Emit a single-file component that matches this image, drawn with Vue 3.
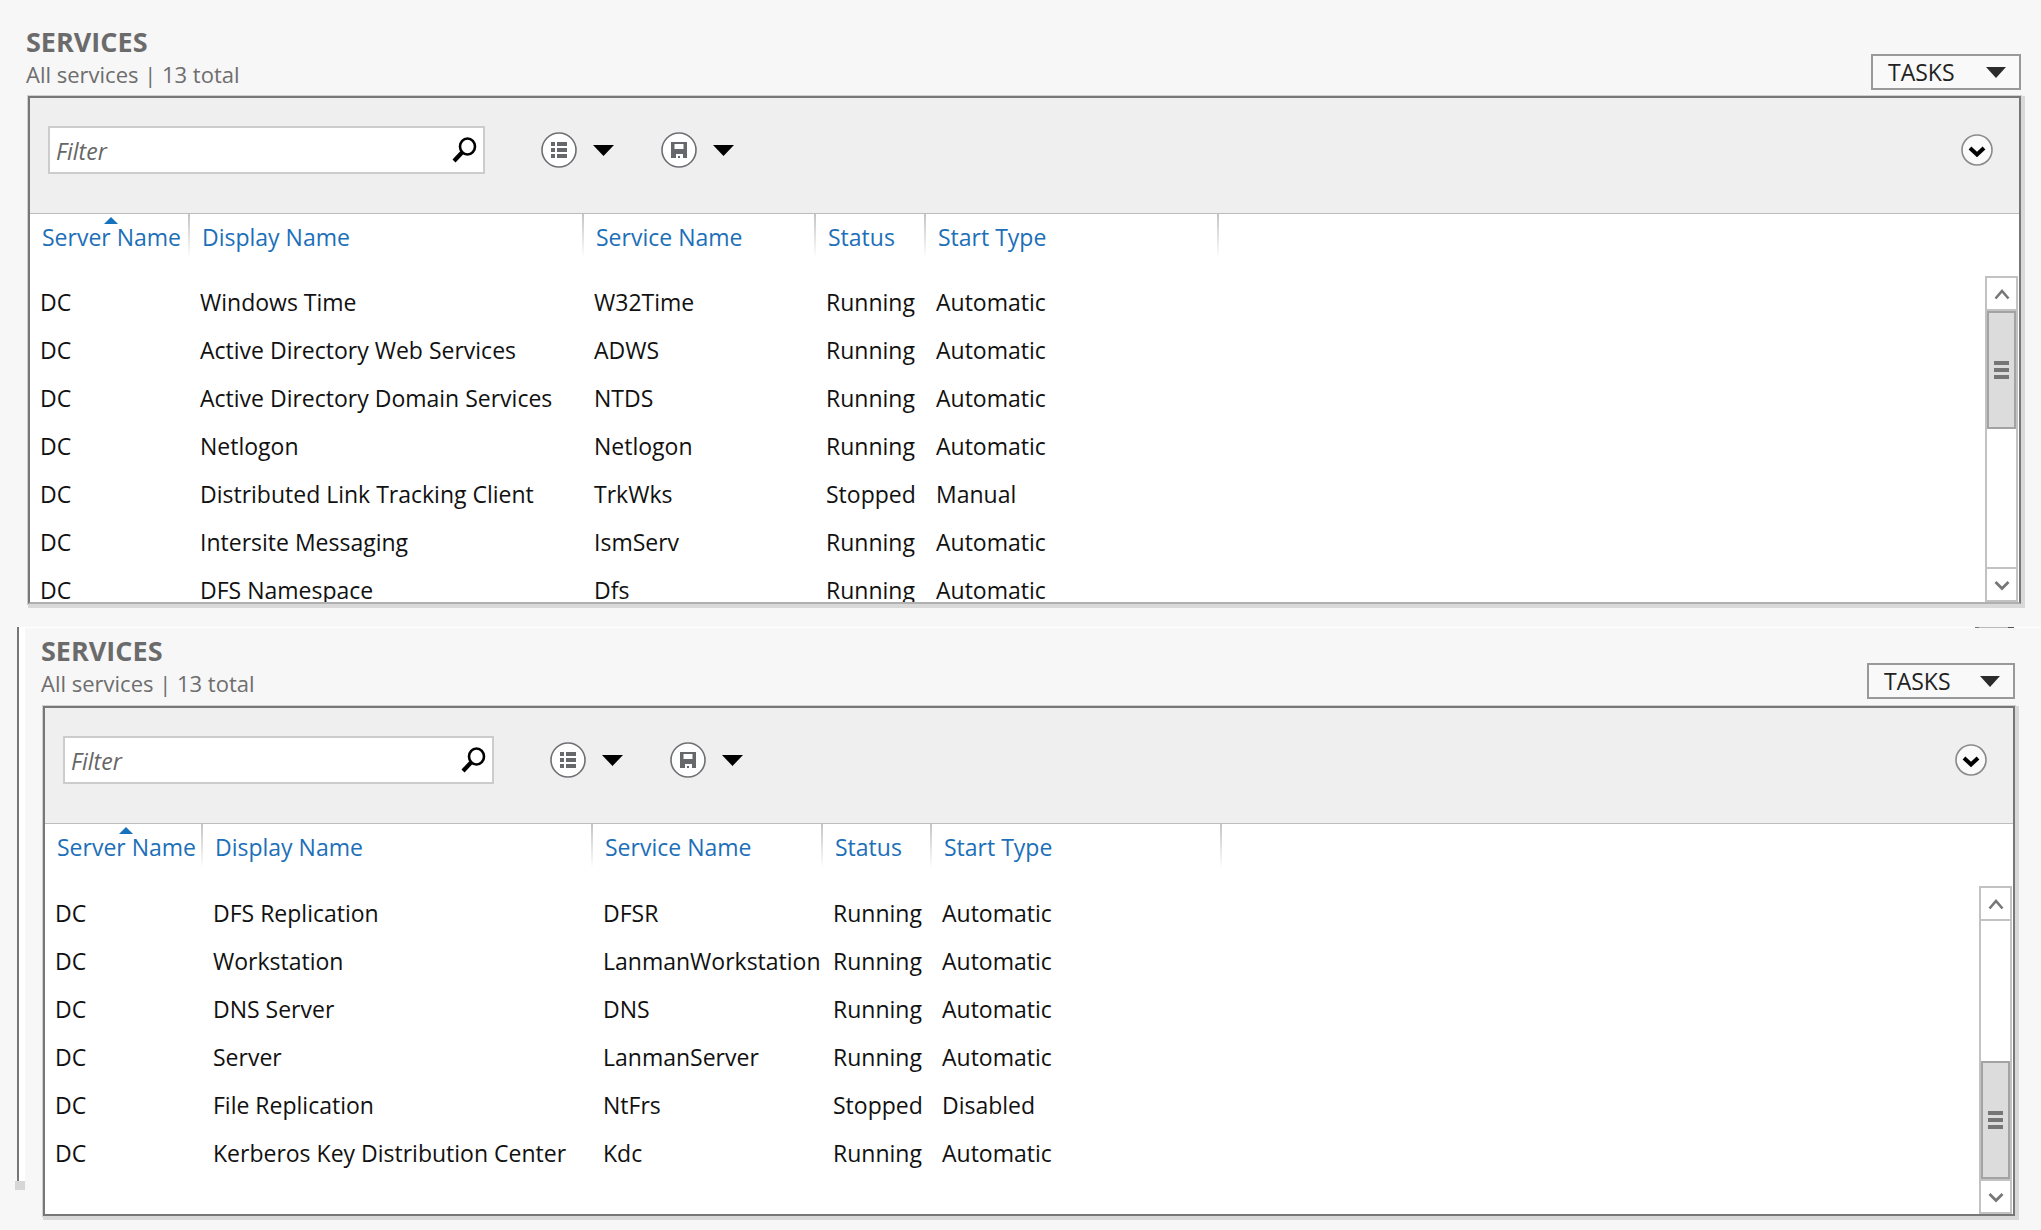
<script setup>
import { ref } from 'vue'

const columns = ['Server Name', 'Display Name', 'Service Name', 'Status', 'Start Type']

const panels = ref([
  {
    id: 'upper',
    filter: '',
    rows: [
      ['DC', 'Windows Time', 'W32Time', 'Running', 'Automatic'],
      ['DC', 'Active Directory Web Services', 'ADWS', 'Running', 'Automatic'],
      ['DC', 'Active Directory Domain Services', 'NTDS', 'Running', 'Automatic'],
      ['DC', 'Netlogon', 'Netlogon', 'Running', 'Automatic'],
      ['DC', 'Distributed Link Tracking Client', 'TrkWks', 'Stopped', 'Manual'],
      ['DC', 'Intersite Messaging', 'IsmServ', 'Running', 'Automatic'],
      ['DC', 'DFS Namespace', 'Dfs', 'Running', 'Automatic'],
    ],
  },
  {
    id: 'lower',
    filter: '',
    rows: [
      ['DC', 'DFS Replication', 'DFSR', 'Running', 'Automatic'],
      ['DC', 'Workstation', 'LanmanWorkstation', 'Running', 'Automatic'],
      ['DC', 'DNS Server', 'DNS', 'Running', 'Automatic'],
      ['DC', 'Server', 'LanmanServer', 'Running', 'Automatic'],
      ['DC', 'File Replication', 'NtFrs', 'Stopped', 'Disabled'],
      ['DC', 'Kerberos Key Distribution Center', 'Kdc', 'Running', 'Automatic'],
    ],
  },
])
</script>

<template>
  <main class="page">
    <div v-for="p in panels" :key="p.id" class="frame" :class="p.id">
      <div v-if="p.id === 'lower'" class="edge"><div class="edge-inner"></div></div>
      <section class="services">
        <header class="head">
          <div class="titles">
            <h2>SERVICES</h2>
            <p>All services | 13 total</p>
          </div>
          <button class="tasks" type="button">
            TASKS
            <svg width="20" height="11" viewBox="0 0 20 11"><path d="M0 0h20L10 11z" fill="#2b2b2b" /></svg>
          </button>
        </header>

        <div class="panel">
          <div class="toolbar">
            <div class="filter">
              <input v-model="p.filter" type="text" placeholder="Filter" aria-label="Filter" />
              <button type="button" aria-label="Search">
                <svg width="26" height="28" viewBox="0 0 26 28" fill="none" stroke="#000">
                  <ellipse cx="16.5" cy="10.5" rx="7.5" ry="8" stroke-width="2.6" />
                  <path d="M11 16.500L3 25" stroke-width="4.2" />
                </svg>
              </button>
            </div>
            <button class="round" type="button" aria-label="Saved criteria">
              <svg width="36" height="36" viewBox="0 0 36 36">
                <circle cx="18" cy="18" r="17" fill="#fff" stroke="#6d6f73" stroke-width="1.6" />
                <path
                  d="M10 10h4v4h-4zM16 10h10v4H16zM10 16h4v4h-4zM16 16h10v4H16zM10 22h4v4h-4zM16 22h10v4H16z"
                  fill="#66686c"
                />
              </svg>
            </button>
            <button class="drop" type="button" aria-label="Criteria menu">
              <svg width="21" height="11" viewBox="0 0 21 11"><path d="M0 0h21L10.500 11z" fill="#000" /></svg>
            </button>
            <button class="round save" type="button" aria-label="Save query">
              <svg width="36" height="36" viewBox="0 0 36 36">
                <circle cx="18" cy="18" r="17" fill="#fff" stroke="#6d6f73" stroke-width="1.6" />
                <path
                  d="M10 10h16v16h-4v-4h-7v4h-5zM13.500 12v5h9v-5zM17 24h2v2h-2z"
                  fill="#66686c"
                  fill-rule="evenodd"
                />
              </svg>
            </button>
            <button class="drop" type="button" aria-label="Save menu">
              <svg width="21" height="11" viewBox="0 0 21 11"><path d="M0 0h21L10.500 11z" fill="#000" /></svg>
            </button>
            <button class="round expand" type="button" aria-label="Expand">
              <svg width="32" height="32" viewBox="0 0 32 32">
                <circle cx="16" cy="16" r="15" fill="#fafafa" stroke="#8a8a8a" stroke-width="1.6" />
                <path d="M9 14l7 6.500L23 14" fill="none" stroke="#000" stroke-width="4" />
              </svg>
            </button>
          </div>

          <div class="body">
            <div class="list">
              <table>
                <colgroup>
                  <col class="c1" /><col class="c2" /><col class="c3" /><col class="c4" /><col class="c5" /><col />
                </colgroup>
                <thead>
                  <tr>
                    <th v-for="(c, i) in columns" :key="c" scope="col">
                      <svg v-if="i === 0" class="sort" width="14" height="7" viewBox="0 0 14 7">
                        <path d="M0 7L7 0l7 7z" fill="#1672bd" />
                      </svg>
                      {{ c }}
                    </th>
                    <td></td>
                  </tr>
                </thead>
                <tbody>
                  <tr v-for="r in p.rows" :key="r[1]">
                    <td v-for="(v, i) in r" :key="i">{{ v }}</td>
                    <td></td>
                  </tr>
                </tbody>
              </table>
            </div>
            <div class="scroll">
              <button type="button" aria-label="Scroll up">
                <svg width="16" height="12" viewBox="0 0 16 12">
                  <path d="M1.500 10.500L8 3l6.500 7.500" fill="none" stroke="#777" stroke-width="2.6" />
                </svg>
              </button>
              <div class="track">
                <div class="thumb"><i></i><i></i><i></i></div>
              </div>
              <button type="button" aria-label="Scroll down">
                <svg width="16" height="12" viewBox="0 0 16 12">
                  <path d="M1.500 3L8 9.500L14.500 3" fill="none" stroke="#777" stroke-width="2.8" />
                </svg>
              </button>
            </div>
          </div>
        </div>
      </section>
    </div>
  </main>
</template>

<style>
html,
body {
  margin: 0;
  background: #f7f7f7;
}
</style>

<style scoped>
.page {
  font-family: 'Open Sans', 'Noto Sans', sans-serif;
  font-size: 23px;
  line-height: 32px;
  color: #111;
  padding-bottom: 14px;
}
.page * {
  box-sizing: border-box;
}
button {
  font: inherit;
  color: inherit;
  background: none;
  border: 0;
  padding: 0;
  display: flex;
  align-items: center;
  justify-content: center;
}
svg {
  display: block;
  flex: none;
}
.frame {
  display: flex;
}
.services {
  flex: 1;
  min-width: 0;
}
.upper .services {
  padding: 26px 20px 0 26px;
}
.lower {
  margin-top: 23px;
  padding-left: 15px;
}
.lower .services {
  position: relative;
  padding: 7px 26px 0 16px;
  border-top: 1px solid #fff;
}
/* sliver of the window border behind the lower panel */
.lower .services::after {
  content: '';
  position: absolute;
  top: -1px;
  right: 27px;
  width: 39px;
  height: 1px;
  background: linear-gradient(90deg, #777 10%, #bbb 10%, #bbb 85%, #555 85%);
}
.edge {
  width: 10px;
  margin-bottom: 26px;
  padding-left: 2px;
  display: flex;
  border-bottom: 9px solid #d6d6d6;
}
.edge-inner {
  flex: 1;
  background: #fff;
  border-left: 2px solid #777;
}

.head {
  display: flex;
  justify-content: space-between;
  align-items: flex-end;
  margin-bottom: 6px;
}
.lower .head {
  margin-bottom: 7px;
}
h2 {
  margin: 0;
  font-size: 27px;
  font-weight: 700;
  line-height: 32px;
  color: #6b6b6b;
}
.titles p {
  margin: 0;
  font-size: 22px;
  color: #6e6e6e;
}
.tasks {
  width: 150px;
  height: 36px;
  justify-content: space-between;
  padding: 0 13px 0 15px;
  border: 2px solid #999;
  background: #f9f9f9;
  color: #222;
}
.lower .tasks {
  width: 148px;
}

.panel {
  margin-left: 2px;
  background: #fff;
  border: 2px solid #777;
  box-shadow: 2px 2px 0 2px #d9d9d9, 0 0 0 1px #cfcfcf;
}
.upper .panel {
  border-bottom-color: #b0b0b0;
}
.toolbar {
  display: flex;
  align-items: center;
  padding: 28px 26px 39px 18px;
  background: #efefef;
  border-bottom: 1px solid #bdbdbd;
}
.filter {
  display: flex;
  width: 437px;
  height: 48px;
  margin-right: 56px;
  background: #fff;
  border: 2px solid #ccc;
}
.lower .filter {
  width: 431px;
}
.filter input {
  flex: 1;
  min-width: 0;
  border: 0;
  outline: 0;
  background: none;
  padding: 2px 0 0 6px;
  font: italic 23px 'Open Sans', 'Noto Sans', sans-serif;
  color: #111;
}
.filter input::placeholder {
  color: #666;
  opacity: 1;
}
.filter button {
  width: 38px;
}
.drop {
  margin-left: 16px;
}
.save {
  margin-left: 47px;
}
.expand {
  margin-left: auto;
}

.body {
  display: flex;
  height: 388px;
}
.lower .body {
  height: 390px;
}
.list {
  flex: 1;
  min-width: 0;
  overflow: hidden;
}
table {
  width: 100%;
  table-layout: fixed;
  border-collapse: collapse;
}
.c1 { width: 160px; }
.c2 { width: 394px; }
.c3 { width: 232px; }
.c4 { width: 110px; }
.c5 { width: 293px; }
.lower .c1 { width: 158px; }
.lower .c2 { width: 390px; }
.lower .c3 { width: 230px; }
.lower .c4 { width: 109px; }
.lower .c5 { width: 290px; }
th {
  position: relative;
  height: 64px;
  padding: 7px 0 0 12px;
  vertical-align: top;
  text-align: left;
  font-weight: 400;
  color: #1c6fb8;
  white-space: nowrap;
  background: linear-gradient(#c4c4c4, #fff) right top / 2px 44px no-repeat;
}
.lower th {
  height: 65px;
}
.sort {
  position: absolute;
  top: 3px;
  left: 74px;
}
td {
  height: 48px;
  padding: 0 0 0 10px;
  white-space: nowrap;
}
.scroll {
  width: 33px;
  margin: 62px 1px 0 0;
  display: flex;
  flex-direction: column;
  border: 2px solid #c2c2c2;
}
.scroll button {
  height: 31px;
}
.track {
  flex: 1;
  display: flex;
  align-items: flex-start;
  border: solid #c2c2c2;
  border-width: 2px 0;
}
.lower .track {
  align-items: flex-end;
}
.thumb {
  flex: 1;
  height: 118px;
  display: flex;
  flex-direction: column;
  align-items: center;
  justify-content: center;
  gap: 3px;
  background: #dcdcdc;
  border: 2px solid #a3a3a3;
}
.thumb i {
  width: 15px;
  height: 4px;
  background: #757575;
}
</style>
